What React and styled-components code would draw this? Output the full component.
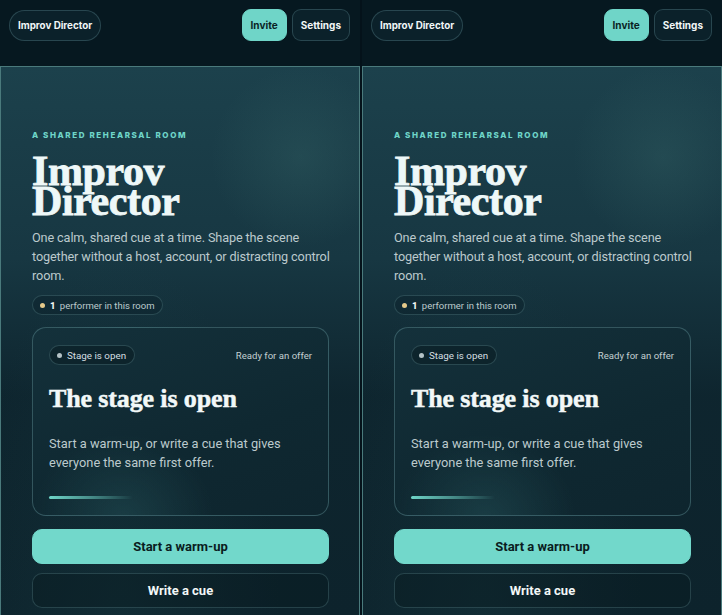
import React from "react";
import styled, { createGlobalStyle } from "styled-components";

const Global = createGlobalStyle`
  html, body {
    margin: 0;
    padding: 0;
    background: #05141a;
  }
  * {
    box-sizing: border-box;
  }
`;

const Screen = styled.div`
  display: flex;
  gap: 2px;
  width: 722px;
  height: 615px;
  overflow: hidden;
  background: #04121a;
  font-family: Roboto, Inter, "Noto Sans", sans-serif;
`;

const Frame = styled.div`
  width: 360px;
  height: 615px;
  display: flex;
  flex-direction: column;
  background: #061820;
  overflow: hidden;
`;

const TopBar = styled.header`
  height: 66px;
  flex-shrink: 0;
  display: flex;
  align-items: flex-start;
  justify-content: space-between;
  padding: 9px 10px 0 9px;
  background: #061820;
`;

const Brand = styled.div`
  height: 31px;
  margin-top: 1px;
  padding: 0 8px;
  display: flex;
  align-items: center;
  border-radius: 16px;
  border: 1px solid rgba(120, 170, 175, 0.28);
  background: #0b212a;
  color: #f2f7f7;
  font-family: Inter, sans-serif;
  font-size: 9.8px;
  font-weight: 700;
`;

const Actions = styled.div`
  display: flex;
  gap: 5px;
`;

const TopButton = styled.button`
  height: 32px;
  padding: 0 8px;
  border-radius: 9px;
  border: 1px solid ${(p) => (p.$accent ? "#6fd5c8" : "rgba(120, 170, 175, 0.28)")};
  background: ${(p) => (p.$accent ? "#6fd5c8" : "#0b212a")};
  color: ${(p) => (p.$accent ? "#0a1f24" : "#f2f7f7")};
  font-family: Inter, sans-serif;
  font-size: 10px;
  font-weight: 700;
`;

const Stage = styled.main`
  flex: 1;
  border: 1px solid #4a7a7c;
  border-bottom: none;
  padding: 63px 30px 0 31px;
  background:
    radial-gradient(circle at 300px 90px, rgba(60, 110, 110, 0.28), transparent 90px),
    radial-gradient(ellipse at 120px 560px, rgba(40, 90, 95, 0.18), transparent 160px),
    linear-gradient(180deg, #1c414c 0%, #173742 35%, #10293360 60%, #0d232c 100%),
    #0d232c;
  display: flex;
  flex-direction: column;
`;

const Eyebrow = styled.div`
  color: #6fd5c8;
  font-family: Inter, sans-serif;
  font-size: 8px;
  font-weight: 800;
  letter-spacing: 0.2em;
  text-transform: uppercase;
`;

const Title = styled.h1`
  margin: 11px 0 0 0;
  font-family: "Liberation Serif", "DejaVu Serif", serif;
  font-weight: 700;
  font-size: 42px;
  line-height: 30px;
  letter-spacing: -0.01em;
  color: #eef8f8;
  -webkit-text-stroke: 0.8px #eef8f8;
  padding-top: 5px;
`;

const Lead = styled.p`
  margin: 13px -6px 0 0;
  color: #bccacd;
  font-size: 12.7px;
  letter-spacing: -0.01em;
  line-height: 18.8px;
`;

const Count = styled.div`
  align-self: flex-start;
  margin-top: 10px;
  height: 20px;
  padding: 0 7px;
  display: flex;
  align-items: center;
  gap: 5px;
  border-radius: 10px;
  border: 1px solid rgba(120, 170, 175, 0.25);
  background: rgba(10, 30, 38, 0.35);
  color: #bccacd;
  font-size: 9.5px;
  b {
    color: #f2f7f7;
    font-weight: 800;
    margin-right: 2px;
  }
`;

const Dot = styled.span`
  width: 5px;
  height: 5px;
  border-radius: 50%;
  background: ${(p) => p.$color};
`;

const Card = styled.section`
  margin-top: 12px;
  height: 189px;
  border-radius: 14px;
  border: 1px solid rgba(120, 175, 180, 0.35);
  background:
    radial-gradient(ellipse at 90px 190px, rgba(50, 110, 115, 0.3), transparent 90px),
    linear-gradient(160deg, #14313b 0%, #0f2831 60%, #0e252e 100%);
  padding: 17px 16px 0 16px;
  display: flex;
  flex-direction: column;
`;

const CardTop = styled.div`
  display: flex;
  align-items: center;
  justify-content: space-between;
`;

const Status = styled.div`
  height: 20px;
  padding: 0 8px 0 7px;
  display: flex;
  align-items: center;
  gap: 5px;
  border-radius: 10px;
  border: 1px solid rgba(120, 170, 175, 0.28);
  background: rgba(8, 25, 32, 0.5);
  color: #d4dfe1;
  font-size: 9.8px;
`;

const Note = styled.span`
  color: #c3cfd2;
  font-size: 9.6px;
`;

const CardTitle = styled.h2`
  margin: 19px 0 0 0;
  font-family: "Liberation Serif", "DejaVu Serif", serif;
  font-weight: 700;
  font-size: 26px;
  line-height: 30px;
  letter-spacing: -0.005em;
  color: #f2f8f8;
  -webkit-text-stroke: 0.5px #f2f8f8;
`;

const CardText = styled.p`
  margin: 20px 0 0 0;
  color: #bccacd;
  font-size: 12.8px;
  line-height: 19px;
`;

const Progress = styled.div`
  margin-top: 24px;
  width: 84px;
  height: 3px;
  border-radius: 2px;
  background: linear-gradient(90deg, #6fd5c8 0%, rgba(111, 213, 200, 0.55) 50%, rgba(111, 213, 200, 0) 100%);
`;

const Buttons = styled.div`
  margin-top: 13px;
  display: flex;
  flex-direction: column;
  gap: 9px;
`;

const Action = styled.button`
  height: 35px;
  border-radius: 10px;
  border: 1px solid ${(p) => (p.$primary ? "#72d8cb" : "rgba(120, 170, 175, 0.25)")};
  background: ${(p) => (p.$primary ? "#72d8cb" : "rgba(8, 24, 31, 0.4)")};
  color: ${(p) => (p.$primary ? "#0a1c21" : "#f2f7f7")};
  font-family: inherit;
  font-size: 13px;
  font-weight: 700;
`;

const Room = () => (
  <Frame>
    <TopBar>
      <Brand>Improv Director</Brand>
      <Actions>
        <TopButton $accent>Invite</TopButton>
        <TopButton>Settings</TopButton>
      </Actions>
    </TopBar>
    <Stage>
      <Eyebrow>A shared rehearsal room</Eyebrow>
      <Title>
        Improv
        <br />
        Director
      </Title>
      <Lead>
        One calm, shared cue at a time. Shape the scene together without a
        host, account, or distracting control room.
      </Lead>
      <Count>
        <Dot $color="#e6c98a" />
        <span>
          <b>1</b> performer in this room
        </span>
      </Count>
      <Card>
        <CardTop>
          <Status>
            <Dot $color="#b4c2c6" />
            Stage is open
          </Status>
          <Note>Ready for an offer</Note>
        </CardTop>
        <CardTitle>The stage is open</CardTitle>
        <CardText>
          Start a warm-up, or write a cue that gives everyone the same first
          offer.
        </CardText>
        <Progress />
      </Card>
      <Buttons>
        <Action $primary>Start a warm-up</Action>
        <Action>Write a cue</Action>
      </Buttons>
    </Stage>
  </Frame>
);

export default function App() {
  return (
    <>
      <Global />
      <Screen>
        <Room />
        <Room />
      </Screen>
    </>
  );
}
